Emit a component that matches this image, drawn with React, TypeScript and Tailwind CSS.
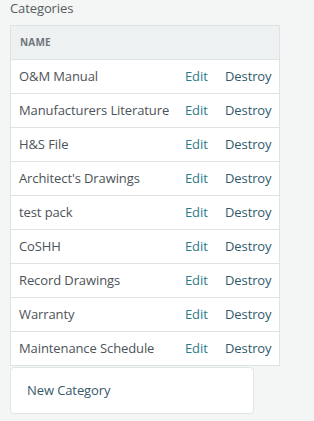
const categories = [
  "O&M Manual",
  "Manufacturers Literature",
  "H&S File",
  "Architect's Drawings",
  "test pack",
  "CoSHH",
  "Record Drawings",
  "Warranty",
  "Maintenance Schedule",
];

export default function App() {
  return (
    <div
      className="min-h-[421px] w-[314px] bg-[#f4f5f5] px-[10px] text-[13px] tracking-[-0.1px] text-[#4d5358]"
      style={{ fontFamily: "'Open Sans', 'Noto Sans', sans-serif" }}
    >
      <h2 className="h-[25px] pt-[1px] text-[13px] leading-[15px] text-[#555b60]">Categories</h2>

      <div className="w-[270px] border border-[#dde2e4] bg-white">
        <div className="flex h-[33px] items-center bg-[#eef1f2] pl-[9px] text-[10px] font-bold tracking-[0.2px] text-[#6e767c]">
          NAME
        </div>
        {categories.map((name) => (
          <div key={name} className="flex h-[34px] items-center border-t border-[#dde2e4]">
            <div className="w-[174px] pl-[8px] whitespace-nowrap">{name}</div>
            <div className="w-[40px] text-[#2e7b8b]">Edit</div>
            <div className="flex-1 text-[#2f5b6c]">Destroy</div>
          </div>
        ))}
      </div>

      <div className="mt-[1px] flex h-[47px] w-[244px] items-center rounded-[4px] border border-[#e1e5e6] bg-white pl-[16px] text-[#36596a]">
        New Category
      </div>
    </div>
  );
}
